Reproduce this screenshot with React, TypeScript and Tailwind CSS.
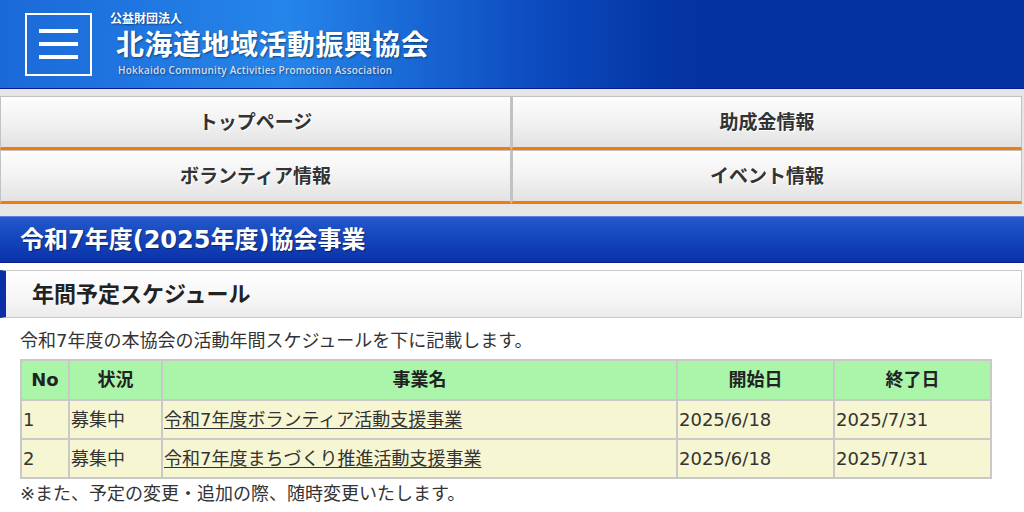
import React from 'react';

const FONT = "font-['DejaVu_Sans','Noto_Sans_CJK_JP',sans-serif]";

const navItems = ['トップページ', '助成金情報', 'ボランティア情報', 'イベント情報'];

const rows = [
  { no: '1', status: '募集中', name: '令和7年度ボランティア活動支援事業', start: '2025/6/18', end: '2025/7/31' },
  { no: '2', status: '募集中', name: '令和7年度まちづくり推進活動支援事業', start: '2025/6/18', end: '2025/7/31' },
];

function MenuIcon() {
  return (
    <div className="w-[67px] h-[63px] border-2 border-white flex flex-col items-center justify-center gap-[9px]">
      <span className="block w-[39px] h-[4px] bg-white" />
      <span className="block w-[39px] h-[4px] bg-white" />
      <span className="block w-[39px] h-[4px] bg-white" />
    </div>
  );
}

function Header() {
  return (
    <header className="h-[89px] border-b border-b-[#0a1c9a] bg-[linear-gradient(90deg,#1b69d8_0%,#2585ea_28%,#0d4cc0_52%,#0334a2_66%,#0233a1_100%)] flex items-center pl-[25px]">
      <MenuIcon />
      <div className="ml-[18px] flex flex-col text-white [text-shadow:1px_1px_2px_rgba(0,0,0,0.45)]">
        <span className="text-[12px] font-bold leading-none">公益財団法人</span>
        <span className="ml-[6px] mt-[5px] text-[28px] font-bold leading-[32px] tracking-[0.5px]">北海道地域活動振興協会</span>
        <span className="ml-[8px] mt-[3px] text-[10px] leading-none text-[#d4ddee] font-['Open_Sans',sans-serif] font-semibold tracking-[0.22px]">
          Hokkaido Community Activities Promotion Association
        </span>
      </div>
    </header>
  );
}

function Nav() {
  return (
    <nav className="bg-[#e6e6e6] pt-[7px] pb-[12px] pr-[2px]">
      <div className="grid grid-cols-2">
        {navItems.map((label, i) => (
          <a
            key={label}
            className={`h-[54px] flex items-center justify-center border border-[#c2c2c2] border-b-[3px] border-b-[#f47a0a] bg-[linear-gradient(180deg,#fdfdfd_0%,#f2f2f2_50%,#e2e2e2_100%)] text-[19px] font-bold text-[#333] [text-shadow:1px_1px_0_#fff] ${i % 2 === 1 ? 'border-l-2' : ''}`}
          >
            {label}
          </a>
        ))}
      </div>
    </nav>
  );
}

export default function App() {
  return (
    <div className={`${FONT} w-[1024px] bg-white text-[#333]`}>
      <Header />
      <Nav />

      <h2 className="h-[47px] flex items-center pl-[20px] border-t border-t-[#5a84dc] border-b border-b-[#0a1f8e] bg-[linear-gradient(180deg,#2458cc_0%,#1444bc_50%,#0a32a8_100%)] text-white text-[24px] font-bold [text-shadow:1px_1px_1px_rgba(0,0,0,0.4)]">
        令和7年度(2025年度)協会事業
      </h2>

      <div className="pt-[7px] pr-[2px]">
        <h3 className="h-[48px] flex items-center border border-[#c8c8c8] border-l-[6px] border-l-[#0a2ea8] bg-[linear-gradient(180deg,#ffffff_0%,#f6f6f6_60%,#ebebeb_100%)] pl-[26px] text-[22px] font-bold text-[#222]">
          年間予定スケジュール
        </h3>
      </div>

      <div className="px-[20px] pt-[11px]">
        <p className="text-[18px] leading-[24px] text-[#333]">
          令和7年度の本協会の活動年間スケジュールを下に記載します。
        </p>

        <table className="mt-[6px] w-[970px] table-fixed border-collapse text-[18px] text-[#333]">
          <colgroup>
            <col className="w-[48px]" />
            <col className="w-[93px]" />
            <col className="w-[515px]" />
            <col className="w-[157px]" />
            <col className="w-[157px]" />
          </colgroup>
          <thead>
            <tr className="bg-[#aaf5aa] h-[40px]">
              {['No', '状況', '事業名', '開始日', '終了日'].map((h) => (
                <th key={h} className="border-2 border-[#c9c9c9] font-bold text-center text-[#222] leading-[24px]">
                  {h}
                </th>
              ))}
            </tr>
          </thead>
          <tbody>
            {rows.map((r) => (
              <tr key={r.no} className="bg-[#f6f6d2] h-[39px]">
                <td className="border-2 border-[#c9c9c9] px-[1px] leading-[24px]">{r.no}</td>
                <td className="border-2 border-[#c9c9c9] px-[1px] leading-[24px]">{r.status}</td>
                <td className="border-2 border-[#c9c9c9] px-[1px] leading-[24px]">
                  <a className="underline underline-offset-2">{r.name}</a>
                </td>
                <td className="border-2 border-[#c9c9c9] px-[1px] leading-[24px]">{r.start}</td>
                <td className="border-2 border-[#c9c9c9] px-[1px] leading-[24px]">{r.end}</td>
              </tr>
            ))}
          </tbody>
        </table>

        <p className="mt-[3px] text-[18px] leading-[24px] text-[#333]">
          ※また、予定の変更・追加の際、随時変更いたします。
        </p>
      </div>
    </div>
  );
}
